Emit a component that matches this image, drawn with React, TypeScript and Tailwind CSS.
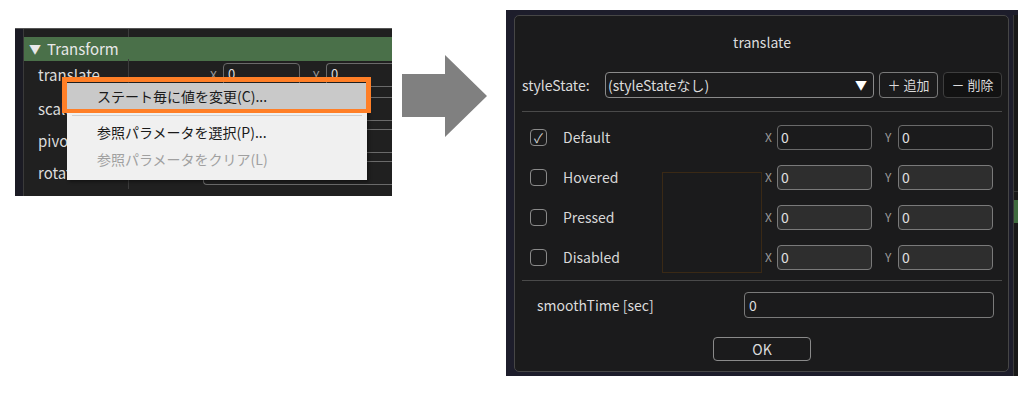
const font = "font-['Noto_Sans_CJK_JP','Noto_Sans',sans-serif]";

const XYField = ({ filled }: { filled?: boolean }) => (
  <div
    className={`flex h-[25px] w-[95px] items-center rounded-[4px] border pl-[3px] text-[14px] text-[#e0e0e0] ${
      filled ? "border-[#7a7a7a] bg-[#2e2e2e]" : "border-[#6a6a6a] bg-transparent"
    }`}
  >
    0
  </div>
);

const Check = ({ checked }: { checked?: boolean }) => (
  <div className="flex h-[17px] w-[17px] items-center justify-center rounded-[4px] border border-[#8a8a8a] text-[13px] leading-none text-[#d0d0d0]">
    {checked ? "✓" : ""}
  </div>
);

const StateRow = ({ label, checked }: { label: string; checked?: boolean }) => (
  <div className="flex h-[40px] items-center pl-[8px] pr-[10px]">
    <Check checked={checked} />
    <span className="ml-[16px] flex-1 text-[14px] text-[#d8d8d8]">{label}</span>
    <span className="w-[12px] text-[12px] text-[#9a9a9a]">X</span>
    <XYField filled={!checked} />
    <span className="ml-[13px] w-[13px] text-[12px] text-[#9a9a9a]">Y</span>
    <div className="w-[94px]">
      <XYField filled={!checked} />
    </div>
  </div>
);

// rows of the inspector; the ones under the popup only show their field outlines
const PropRow = ({ label, single, hidden }: { label: string; single?: boolean; hidden?: boolean }) => (
  <div className="flex h-[32px] items-center">
    <div className="flex h-full w-[105px] items-center border-r border-[#3c3c3c] pl-[14px] text-[15px] text-[#dcdcdc]">
      {label}
    </div>
    {single ? (
      <div className="ml-[74px] h-[24px] flex-1 rounded-l-[4px] border border-r-0 border-[#6a6a6a]" />
    ) : (
      <div className="flex flex-1 items-center pl-[81px]">
        <span className="w-[13px] text-[12px] text-[#9a9a9a]">{hidden ? "" : "X"}</span>
        <div className="h-[24px] w-[77px] rounded-[4px] border border-[#6a6a6a] pl-[4px] text-[13px] text-[#ddd]">
          {hidden ? "" : "0"}
        </div>
        <span className="ml-[13px] w-[13px] text-[12px] text-[#9a9a9a]">{hidden ? "" : "Y"}</span>
        <div className="h-[24px] flex-1 rounded-l-[4px] border border-r-0 border-[#6a6a6a] pl-[4px] text-[13px] text-[#ddd]">
          {hidden ? "" : "0"}
        </div>
      </div>
    )}
  </div>
);

const Inspector = () => (
  <div className="relative ml-[15px] mt-[28px] flex h-[168px] w-[377px] overflow-hidden border-t border-[#555] bg-[#202020]">
    <div className="w-[8px] bg-[#1b1b24]" />
    <div className="flex flex-1 flex-col border-l border-[#3a3a3a]">
      <div className="flex h-[8px]">
        <div className="w-[105px] border-r border-[#3c3c3c]" />
      </div>
      <div className="flex h-[24px] items-center gap-[6px] bg-[#4a7049] pl-[5px] text-[15px] text-[#e8e8e8]">
        <span className="text-[12px]">▼</span>
        <span>Transform</span>
      </div>
      <div className="-mt-[2px]">
        <PropRow label="translate" />
      </div>
      <div className="mt-[2px]">
        <PropRow label="scale" hidden />
      </div>
      <PropRow label="pivot" hidden />
      <PropRow label="rotation" single />
    </div>

    {/* context menu */}
    <div className="absolute left-[52px] top-[54px] flex h-[97px] w-[300px] flex-col bg-[#f0f0f0] text-[14px] shadow-[2px_2px_3px_rgba(0,0,0,0.4)]">
      <div className="flex h-[26px] items-center bg-[#c9c9c9] pl-[30px] text-[#1a1a1a]">ステート毎に値を変更(C)...</div>
      <div className="mx-[5px] mt-[6px] h-px bg-[#cfcfcf]" />
      <div className="flex h-[29px] items-center pl-[30px] pt-[3px] text-[#1a1a1a]">参照パラメータを選択(P)...</div>
      <div className="flex h-[29px] items-center pl-[30px] text-[#a0a0a0]">参照パラメータをクリア(L)</div>
    </div>
    <div className="absolute left-[47px] top-[48px] h-[36px] w-[309px] border-[5px] border-b-[4px] border-[#ff7f27]" />
  </div>
);

const Arrow = () => (
  <svg className="ml-[10px] mt-[55px]" width="85" height="82" viewBox="0 0 85 82">
    <polygon points="0,19 43,19 43,0 85,41 43,82 43,62 0,62" fill="#808080" />
  </svg>
);

const Dialog = () => (
  <div className="ml-[19px] mt-[10px] flex h-[366px] w-[512px] bg-[#1d1d2b]">
    <div className="relative ml-[8px] mt-[5px] flex h-[357px] w-[495px] flex-col rounded-[5px] border border-[#464646] bg-[#1b1b1c] pl-[7px] pr-[6px] text-[#dcdcdc]">
      <div className="mt-[16px] h-[20px] text-center text-[14px] leading-[20px]">translate</div>

      <div className="mt-[20px] flex h-[26px] items-center text-[14px]">
        <span className="w-[83px]">styleState:</span>
        <div className="flex h-full w-[269px] items-center justify-between rounded-[4px] border border-[#8a8a8a] pl-[2px] pr-[6px]">
          <span>(styleStateなし)</span>
          <span className="text-[12px] text-white">▼</span>
        </div>
        <div className="ml-[5px] flex h-full w-[59px] items-center justify-center rounded-[4px] border border-[#7a7a7a] text-[13px]">
          ＋ 追加
        </div>
        <div className="ml-[5px] flex h-full w-[59px] items-center justify-center rounded-[4px] border border-[#3e3e3e] bg-[#121212] text-[13px]">
          － 削除
        </div>
      </div>

      <div className="mt-[13px] h-px bg-[#4a4a4a]" />

      <div className="mt-[5px] flex flex-col">
        <StateRow label="Default" checked />
        <StateRow label="Hovered" />
        <StateRow label="Pressed" />
        <StateRow label="Disabled" />
      </div>

      <div className="mt-[3px] h-px bg-[#4a4a4a]" />

      <div className="mt-[11px] flex h-[26px] items-center pl-[15px] pr-[8px] text-[14px]">
        <span className="flex-1">smoothTime [sec]</span>
        <div className="flex h-full w-[250px] items-center rounded-[4px] border border-[#7a7a7a] pl-[4px]">0</div>
      </div>

      <div className="mt-[19px] flex justify-center">
        <div className="flex h-[24px] w-[98px] items-center justify-center rounded-[4px] border border-[#8a8a8a] text-[14px]">
          OK
        </div>
      </div>

      {/* stray focus rect left over in the capture */}
      <div className="absolute left-[147px] top-[156px] h-[101px] w-[100px] border border-[#3a2915]" />
    </div>

    <div className="flex w-[9px] flex-col">
      <div className="ml-[4px] mt-[5px] flex flex-1 flex-col border-l border-[#3a3a3a] bg-[#181818]">
        <div className="h-[176px]" />
        <div className="h-px bg-[#333]" />
        <div className="mt-[8px] h-[23px] bg-[#3f6a3f]" />
      </div>
    </div>
  </div>
);

export default function App() {
  return (
    <div className={`flex h-[401px] w-[1032px] items-start bg-white ${font}`}>
      <Inspector />
      <Arrow />
      <Dialog />
    </div>
  );
}
